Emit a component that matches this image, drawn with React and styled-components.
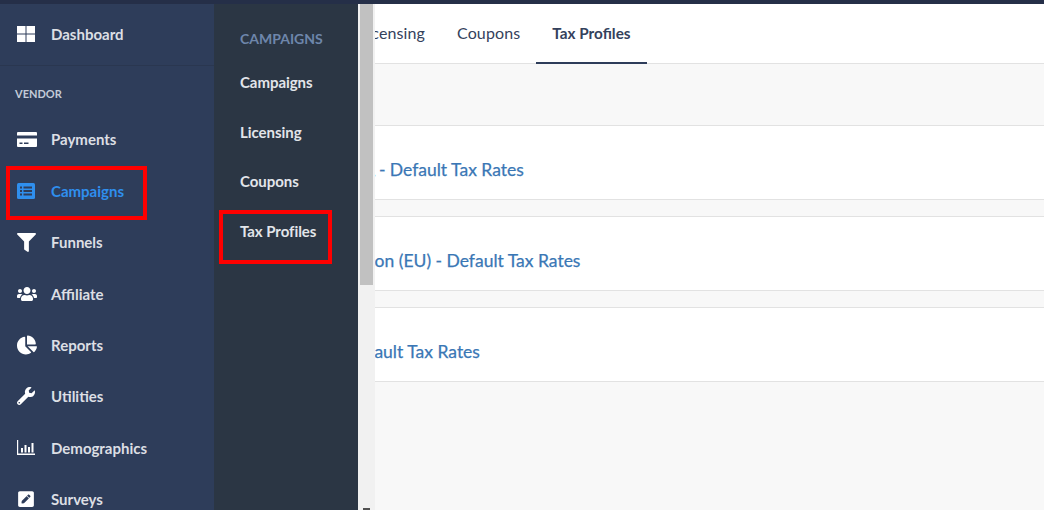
import React from 'react';
import styled, { createGlobalStyle } from 'styled-components';
import { FaFilter, FaUsers, FaChartPie, FaWrench, FaPenSquare } from 'react-icons/fa';

const Global = createGlobalStyle`
  html, body { margin: 0; padding: 0; height: 510px; overflow: hidden; background: #f8f8f8; }
  * { box-sizing: border-box; }
  body { font-family: "Lato", "Liberation Sans", sans-serif; }
`;

const Page = styled.div`
  position: relative;
  width: 1044px;
  height: 510px;
  display: flex;
  flex-direction: column;
  overflow: hidden;
`;
const TopBar = styled.div`
  height: 4px;
  flex: none;
  background: #252f48;
`;
const Body = styled.div`
  flex: 1;
  display: flex;
  min-height: 0;
`;
const Sidebar = styled.nav`
  width: 214px;
  flex: none;
  background: #2e3d5a;
  overflow: hidden;
`;
const DashRow = styled.div`
  height: 62px;
  padding: 0 0 2px 17px;
  display: flex;
  align-items: center;
  gap: 14px;
  border-bottom: 1px solid #2a3750;
  color: #dcdfe4;
  font-size: 15px;
  font-weight: 700;
`;
const SectionLabel = styled.div`
  height: 47.75px;
  padding: 21px 0 0 15px;
  color: #c3cbd8;
  font-size: 11px;
  line-height: 13px;
  font-weight: 700;
`;
const NavItem = styled.div`
  height: 51.4px;
  padding-left: 17px;
  display: flex;
  align-items: center;
  gap: 14px;
  font-size: 15px;
  font-weight: 700;
  color: ${p => (p.$active ? '#2f8fee' : '#dcdfe4')};
`;
const IconBox = styled.span`
  width: 20px;
  height: 20px;
  flex: none;
  display: flex;
  align-items: center;
  justify-content: flex-start;
  color: ${p => (p.$active ? '#2f8fee' : '#ffffff')};
  font-size: ${p => p.$size || 18}px;
`;
const SubMenu = styled.nav`
  width: 144px;
  flex: none;
  background: #2b3644;
  padding: 24px 0 0 26px;
`;
const SubTitle = styled.div`
  height: 29.4px;
  color: #6e86ab;
  font-size: 14px;
  line-height: 22px;
  font-weight: 700;
`;
const SubItem = styled.div`
  height: 49.5px;
  display: flex;
  align-items: center;
  color: #e2e5ea;
  font-size: 15px;
  font-weight: 700;
  letter-spacing: -0.05px;
`;
const Scrollbar = styled.div`
  position: relative;
  width: 17px;
  flex: none;
  padding: 0 2px;
  background: #f1f1f1;
`;
const Thumb = styled.div`
  height: 281px;
  background: #c1c1c1;
`;
const ScrollArrow = styled.div`
  position: absolute;
  left: 5px;
  bottom: 0;
  width: 7px;
  height: 2px;
  background: #505050;
`;
const Main = styled.main`
  flex: 1;
  min-width: 0;
  overflow: hidden;
  background: #f8f8f8;
`;
const Tabs = styled.div`
  height: 60px;
  background: #fff;
  border-bottom: 1px solid #e2e2e2;
  display: flex;
`;
const TabStrip = styled.div`
  display: flex;
  margin-left: -32px;
`;
const Tab = styled.div`
  height: 60px;
  padding: 0 16px 1px;
  display: flex;
  align-items: center;
  font-size: ${p => (p.$active ? 15.3 : 16)}px;
  letter-spacing: ${p => (p.$active ? 0 : 0.12)}px;
  font-weight: ${p => (p.$active ? 700 : 400)};
  color: #34415c;
  border-bottom: 2px solid ${p => (p.$active ? '#2e3d5a' : 'transparent')};
`;
const Rows = styled.div`
  padding-top: 61px;
  display: flex;
  flex-direction: column;
  gap: 16px;
`;
const Row = styled.div`
  height: 75px;
  padding-top: 13px;
  background: #fff;
  border-top: 1px solid #e2e2e2;
  border-bottom: 1px solid #e2e2e2;
  display: flex;
  align-items: center;
`;
const RowLink = styled.a`
  margin-left: ${p => p.$shift}px;
  white-space: nowrap;
  font-size: 17.5px;
  color: #3a77b5;
  -webkit-text-stroke: 0.25px #3a77b5;
`;
const RedBox = styled.div`
  position: absolute;
  border: 4px solid #ff0000;
  left: ${p => p.$x}px;
  top: ${p => p.$y}px;
  width: ${p => p.$w}px;
  height: ${p => p.$h}px;
`;

const GridIcon = () => (
  <svg width="18" height="16" viewBox="0 0 18 16" fill="#fff">
    <rect x="0" y="0" width="8.5" height="7.5" />
    <rect x="9.5" y="0" width="8.5" height="7.5" />
    <rect x="0" y="8.5" width="8.5" height="7.5" />
    <rect x="9.5" y="8.5" width="8.5" height="7.5" />
  </svg>
);
const CardIcon = () => (
  <svg width="20" height="15" viewBox="0 0 20 15">
    <path fill="#fff" d="M1 0h18a1 1 0 0 1 1 1v2.5H0V1a1 1 0 0 1 1-1zM0 6.5h20V14a1 1 0 0 1-1 1H1a1 1 0 0 1-1-1z" />
    <rect x="2.5" y="10.5" width="3" height="1.5" fill="#2e3d5a" />
    <rect x="7" y="10.5" width="4.5" height="1.5" fill="#2e3d5a" />
  </svg>
);
const ListIcon = () => (
  <svg width="18" height="16" viewBox="0 0 18 16">
    <rect width="18" height="16" rx="1.5" fill="#2f8fee" />
    <g fill="#2e3d5a">
      <rect x="3" y="3.5" width="2" height="2" />
      <rect x="3" y="7" width="2" height="2" />
      <rect x="3" y="10.5" width="2" height="2" />
      <rect x="6.5" y="3.5" width="8.5" height="2" />
      <rect x="6.5" y="7" width="8.5" height="2" />
      <rect x="6.5" y="10.5" width="8.5" height="2" />
    </g>
  </svg>
);
const BarsIcon = () => (
  <svg width="18" height="15" viewBox="0 0 18 15" fill="#fff">
    <path d="M0 0h1.2v13.6H18V15H0z" />
    <rect x="4" y="8" width="2" height="4.5" />
    <rect x="7.5" y="5" width="2" height="7.5" />
    <rect x="11" y="7" width="2" height="5.5" />
    <rect x="14.5" y="3" width="2" height="9.5" />
  </svg>
);

const items = [
  { label: 'Payments', icon: <CardIcon /> },
  { label: 'Campaigns', icon: <ListIcon />, active: true },
  { label: 'Funnels', icon: <FaFilter />, size: 19 },
  { label: 'Affiliate', icon: <FaUsers />, size: 22 },
  { label: 'Reports', icon: <FaChartPie />, size: 20 },
  { label: 'Utilities', icon: <FaWrench />, size: 18 },
  { label: 'Demographics', icon: <BarsIcon /> },
  { label: 'Surveys', icon: <FaPenSquare />, size: 18 },
];

const rows = [
  { text: 'USA - Default Tax Rates', shift: -34 },
  { text: 'Union (EU) - Default Tax Rates', shift: -27 },
  { text: 'Default Tax Rates', shift: -29 },
];

export default function App() {
  return (
    <Page>
      <Global />
      <TopBar />
      <Body>
        <Sidebar>
          <DashRow>
            <IconBox><GridIcon /></IconBox>
            Dashboard
          </DashRow>
          <SectionLabel>VENDOR</SectionLabel>
          {items.map(it => (
            <NavItem key={it.label} $active={it.active}>
              <IconBox $active={it.active} $size={it.size}>{it.icon}</IconBox>
              {it.label}
            </NavItem>
          ))}
        </Sidebar>
        <SubMenu>
          <SubTitle>CAMPAIGNS</SubTitle>
          {['Campaigns', 'Licensing', 'Coupons', 'Tax Profiles'].map(s => (
            <SubItem key={s}>{s}</SubItem>
          ))}
        </SubMenu>
        <Scrollbar>
          <Thumb />
          <ScrollArrow />
        </Scrollbar>
        <Main>
          <Tabs>
            <TabStrip>
              <Tab>Licensing</Tab>
              <Tab>Coupons</Tab>
              <Tab $active>Tax Profiles</Tab>
            </TabStrip>
          </Tabs>
          <Rows>
            {rows.map(r => (
              <Row key={r.text}><RowLink $shift={r.shift}>{r.text}</RowLink></Row>
            ))}
          </Rows>
        </Main>
      </Body>
      <RedBox $x={6} $y={166} $w={141} $h={54} />
      <RedBox $x={219} $y={210} $w={113} $h={54} />
    </Page>
  );
}
